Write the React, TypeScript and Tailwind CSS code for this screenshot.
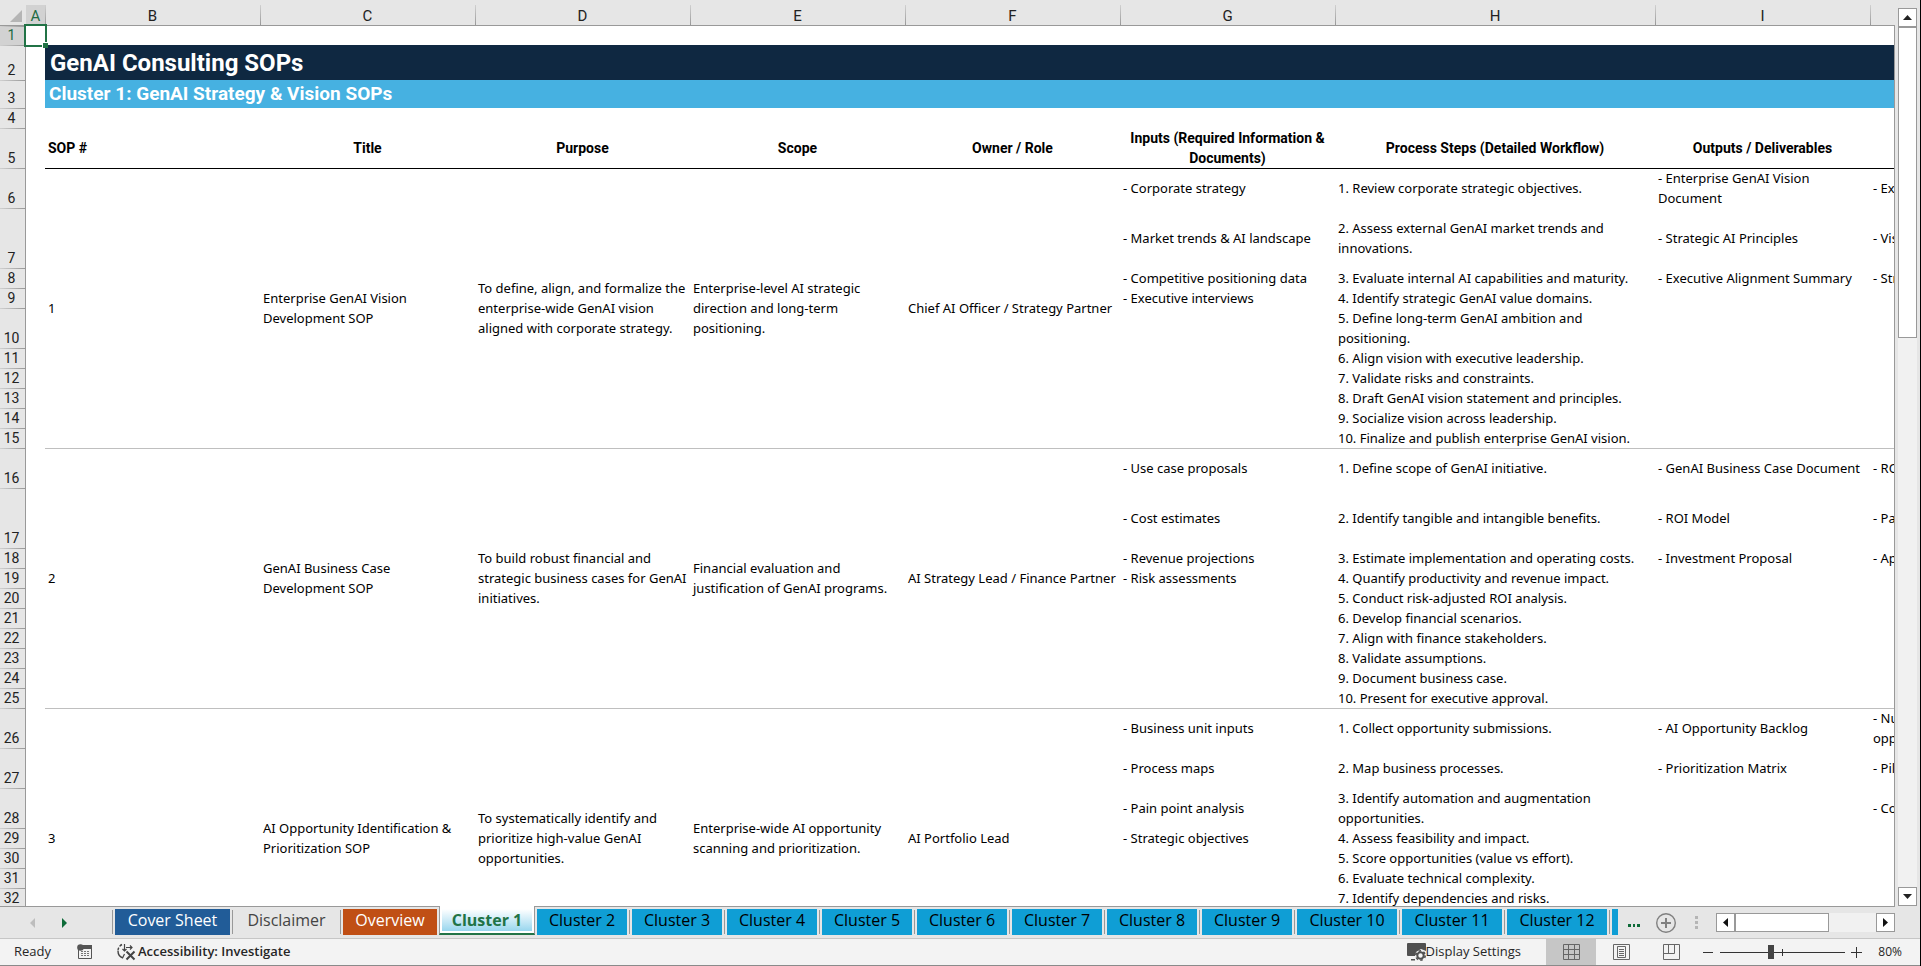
import { useState } from "react";

type Step = { h: string; input?: string; step?: string; output?: string; kpi?: string };
type Sop = { id: string; first: number; title: string; purpose: string; scope: string; owner: string; rows: Step[] };

const columns = ["B", "C", "D", "E", "F", "G", "H", "I"];

const sops: Sop[] = [
  {
    id: "1",
    first: 6,
    title: "Enterprise GenAI Vision\nDevelopment SOP",
    purpose: "To define, align, and formalize the\nenterprise-wide GenAI vision\naligned with corporate strategy.",
    scope: "Enterprise-level AI strategic\ndirection and long-term\npositioning.",
    owner: "Chief AI Officer / Strategy Partner",
    rows: [
      { h: "h-10", input: "- Corporate strategy", step: "1. Review corporate strategic objectives.", output: "- Enterprise GenAI Vision\nDocument", kpi: "- Ex" },
      { h: "h-15", input: "- Market trends & AI landscape", step: "2. Assess external GenAI market trends and\ninnovations.", output: "- Strategic AI Principles", kpi: "- Vis" },
      { h: "h-5", input: "- Competitive positioning data", step: "3. Evaluate internal AI capabilities and maturity.", output: "- Executive Alignment Summary", kpi: "- Str" },
      { h: "h-5", input: "- Executive interviews", step: "4. Identify strategic GenAI value domains." },
      { h: "h-10", step: "5. Define long-term GenAI ambition and\npositioning." },
      { h: "h-5", step: "6. Align vision with executive leadership." },
      { h: "h-5", step: "7. Validate risks and constraints." },
      { h: "h-5", step: "8. Draft GenAI vision statement and principles." },
      { h: "h-5", step: "9. Socialize vision across leadership." },
      { h: "h-5", step: "10. Finalize and publish enterprise GenAI vision." },
    ],
  },
  {
    id: "2",
    first: 16,
    title: "GenAI Business Case\nDevelopment SOP",
    purpose: "To build robust financial and\nstrategic business cases for GenAI\ninitiatives.",
    scope: "Financial evaluation and\njustification of GenAI programs.",
    owner: "AI Strategy Lead / Finance Partner",
    rows: [
      { h: "h-10", input: "- Use case proposals", step: "1. Define scope of GenAI initiative.", output: "- GenAI Business Case Document", kpi: "- RO" },
      { h: "h-15", input: "- Cost estimates", step: "2. Identify tangible and intangible benefits.", output: "- ROI Model", kpi: "- Pa" },
      { h: "h-5", input: "- Revenue projections", step: "3. Estimate implementation and operating costs.", output: "- Investment Proposal", kpi: "- Ap" },
      { h: "h-5", input: "- Risk assessments", step: "4. Quantify productivity and revenue impact." },
      { h: "h-5", step: "5. Conduct risk-adjusted ROI analysis." },
      { h: "h-5", step: "6. Develop financial scenarios." },
      { h: "h-5", step: "7. Align with finance stakeholders." },
      { h: "h-5", step: "8. Validate assumptions." },
      { h: "h-5", step: "9. Document business case." },
      { h: "h-5", step: "10. Present for executive approval." },
    ],
  },
  {
    id: "3",
    first: 26,
    title: "AI Opportunity Identification &\nPrioritization SOP",
    purpose: "To systematically identify and\nprioritize high-value GenAI\nopportunities.",
    scope: "Enterprise-wide AI opportunity\nscanning and prioritization.",
    owner: "AI Portfolio Lead",
    rows: [
      { h: "h-10", input: "- Business unit inputs", step: "1. Collect opportunity submissions.", output: "- AI Opportunity Backlog", kpi: "- Nu\nopp" },
      { h: "h-10", input: "- Process maps", step: "2. Map business processes.", output: "- Prioritization Matrix", kpi: "- Pil" },
      { h: "h-10", input: "- Pain point analysis", step: "3. Identify automation and augmentation\nopportunities.", kpi: "- Co" },
      { h: "h-5", input: "- Strategic objectives", step: "4. Assess feasibility and impact." },
      { h: "h-5", step: "5. Score opportunities (value vs effort)." },
      { h: "h-5", step: "6. Evaluate technical complexity." },
      { h: "h-5", step: "7. Identify dependencies and risks." },
      { h: "h-15" },
    ],
  },
];

const tabs = [
  { name: "Cover Sheet", look: "w-[115px] bg-[#215c98] text-white" },
  { name: "Disclaimer", look: "w-[103px] text-[#444444]" },
  { name: "Overview", look: "w-[94px] bg-[#c04f15] text-white" },
  { name: "Cluster 1", look: "w-[90px] bg-[#0f9ed5] text-black" },
  { name: "Cluster 2", look: "w-[90px] bg-[#0f9ed5] text-black" },
  { name: "Cluster 3", look: "w-[90px] bg-[#0f9ed5] text-black" },
  { name: "Cluster 4", look: "w-[90px] bg-[#0f9ed5] text-black" },
  { name: "Cluster 5", look: "w-[90px] bg-[#0f9ed5] text-black" },
  { name: "Cluster 6", look: "w-[90px] bg-[#0f9ed5] text-black" },
  { name: "Cluster 7", look: "w-[90px] bg-[#0f9ed5] text-black" },
  { name: "Cluster 8", look: "w-[90px] bg-[#0f9ed5] text-black" },
  { name: "Cluster 9", look: "w-[90px] bg-[#0f9ed5] text-black" },
  { name: "Cluster 10", look: "w-[100px] bg-[#0f9ed5] text-black" },
  { name: "Cluster 11", look: "w-[100px] bg-[#0f9ed5] text-black" },
  { name: "Cluster 12", look: "w-[100px] bg-[#0f9ed5] text-black" },
];

const cell = "p-0 pl-[3px] whitespace-pre text-left align-middle text-[13px] leading-5 font-['Noto_Sans',sans-serif]";
const edge = "border-r border-[#999999]";

function RowHead({ n, active = false }: { n?: number; active?: boolean }) {
  return (
    <th
      scope="row"
      className={
        "p-0 pr-[2px] border-r border-[#999999] align-bottom text-center font-normal bg-[linear-gradient(to_right,#d0d0d0,#999999)] bg-[length:100%_1px] bg-no-repeat " +
        (active ? "bg-[#d2d2d2] text-[#1e6b43]" : "bg-[#e6e6e6] text-[#222222]")
      }
    >
      {n}
    </th>
  );
}

function SopRows({ sop }: { sop: Sop }) {
  return (
    <>
      {sop.rows.map((row, i) => {
        const line = i > 0 ? "" : sop.first === 6 ? " shadow-[inset_0_1px_0_#000000]" : " shadow-[inset_0_1px_0_#bfbfbf]";
        return (
          <tr key={i} className={row.h}>
            <RowHead n={row.step ? sop.first + i : undefined} />
            <td className="p-0"></td>
            {i === 0 && (
              <>
                <td rowSpan={sop.rows.length} className={cell + line}>{sop.id}</td>
                <td rowSpan={sop.rows.length} className={cell + line}>{sop.title}</td>
                <td rowSpan={sop.rows.length} className={cell + line}>{sop.purpose}</td>
                <td rowSpan={sop.rows.length} className={cell + line}>{sop.scope}</td>
                <td rowSpan={sop.rows.length} className={cell + line}>{sop.owner}</td>
              </>
            )}
            <td className={cell + line}>{row.input}</td>
            <td className={cell + line}>{row.step}</td>
            <td className={cell + line}>{row.output}</td>
            <td className={cell + " overflow-hidden " + edge + line}>{row.kpi}</td>
          </tr>
        );
      })}
    </>
  );
}

function Sheet() {
  return (
    <main className="flex-1 min-w-0 overflow-hidden bg-white">
      <table className="w-full table-fixed border-separate border-spacing-0 text-[14px] leading-5 text-black">
        <colgroup>
          <col className="w-[26px]" />
          <col className="w-[19px]" />
          <col className="w-[215px]" />
          <col className="w-[215px]" />
          <col className="w-[215px]" />
          <col className="w-[215px]" />
          <col className="w-[215px]" />
          <col className="w-[215px]" />
          <col className="w-[320px]" />
          <col className="w-[215px]" />
          <col />
        </colgroup>
        <thead>
          <tr className="h-[26px] bg-[#e6e6e6] text-[15px] leading-[18px] text-[#222222]">
            <td className="p-0 border-b border-[#999999]">
              <button aria-label="Select all" className="block ml-[10px] mt-[6px]">
                <svg width="12" height="12" viewBox="0 0 12 12"><path d="M12 0V12H0Z" fill="#b5b5b5" /></svg>
              </button>
            </td>
            <th scope="col" className="p-0 pt-[7px] border-b border-[#999999] font-normal text-[#1e6b43] bg-[linear-gradient(#d2d2d2,#d2d2d2)] bg-[length:100%_20px] bg-bottom bg-no-repeat">A</th>
            {columns.map((c) => (
              <th key={c} scope="col" className="p-0 pt-[7px] border-b border-[#999999] font-normal bg-[linear-gradient(#d0d0d0,#999999)] bg-[length:1px_20px] bg-left-bottom bg-no-repeat">{c}</th>
            ))}
            <td className="p-0 border-b border-[#999999] bg-[linear-gradient(#d0d0d0,#999999)] bg-[length:1px_20px] bg-left-bottom bg-no-repeat"></td>
          </tr>
        </thead>
        <tbody>
          <tr className="h-[19px] leading-[19px]">
            <RowHead n={1} active />
            <td className="relative z-10 p-0">
              <span className="absolute -inset-[2px] border-2 border-[#217346]"></span>
              <span className="absolute -right-[3px] -bottom-[3px] size-[6px] border-t border-l border-white bg-[#217346]"></span>
            </td>
            <td colSpan={9} className={"p-0 " + edge}></td>
          </tr>
          <tr className="h-[35px]">
            <RowHead n={2} />
            <td className="p-0"></td>
            <td colSpan={9} className={"p-0 pl-[5px] bg-[#0f2841] text-white text-2xl leading-[34px] font-bold align-middle " + edge}>GenAI Consulting SOPs</td>
          </tr>
          <tr className="h-[28px]">
            <RowHead n={3} />
            <td className="p-0"></td>
            <td colSpan={9} className={"p-0 pl-1 bg-[#46b1e1] text-white text-[19px] leading-7 font-bold align-middle " + edge}>Cluster 1: GenAI Strategy &amp; Vision SOPs</td>
          </tr>
          <tr className="h-5">
            <RowHead n={4} />
            <td colSpan={10} className={"p-0 " + edge}></td>
          </tr>
          <tr className="h-10">
            <RowHead n={5} />
            <td className="p-0"></td>
            <th scope="col" className="p-0 pl-[3px] text-left font-bold">SOP #</th>
            <th scope="col" className="p-0 font-bold">Title</th>
            <th scope="col" className="p-0 font-bold">Purpose</th>
            <th scope="col" className="p-0 font-bold">Scope</th>
            <th scope="col" className="p-0 font-bold">Owner / Role</th>
            <th scope="col" className="p-0 font-bold whitespace-pre">{"Inputs (Required Information &\nDocuments)"}</th>
            <th scope="col" className="p-0 font-bold">Process Steps (Detailed Workflow)</th>
            <th scope="col" className="p-0 font-bold">Outputs / Deliverables</th>
            <td className={"p-0 " + edge}></td>
          </tr>
          {sops.map((s) => (
            <SopRows key={s.id} sop={s} />
          ))}
        </tbody>
      </table>
    </main>
  );
}

const scrollButton = "flex items-center justify-center shrink-0 size-[19px] bg-white border border-[#999999]";

function VerticalScroll() {
  return (
    <div className="flex flex-col w-[19px] shrink-0 mx-[3px] pt-2 bg-[#e6e6e6]">
      <button aria-label="Scroll up" className={scrollButton}>
        <svg width="9" height="5" viewBox="0 0 9 5"><path d="M4.5 0L9 5H0Z" fill="#222222" /></svg>
      </button>
      <div className="flex-1 bg-[#f1f1f1]">
        <div className="h-[311px] bg-white border border-[#999999]"></div>
      </div>
      <button aria-label="Scroll down" className={scrollButton}>
        <svg width="9" height="5" viewBox="0 0 9 5"><path d="M0 0H9L4.5 5Z" fill="#222222" /></svg>
      </button>
    </div>
  );
}

function TabBar() {
  const [active, setActive] = useState("Cluster 1");

  return (
    <nav className="flex h-8 shrink-0 mr-[25px] border-t border-[#999999] font-['Open_Sans',sans-serif]">
      <div className="flex items-center w-[112px] shrink-0 pl-[30px] gap-[27px]">
        <button aria-label="Previous sheets">
          <svg width="5" height="10" viewBox="0 0 5 10"><path d="M5 0V10L0 5Z" fill="#bdbdbd" /></svg>
        </button>
        <button aria-label="Next sheets">
          <svg width="5" height="10" viewBox="0 0 5 10"><path d="M0 0V10L5 5Z" fill="#0e6b39" /></svg>
        </button>
      </div>

      <span className="w-px h-6 mt-[3px] bg-[#999999]"></span>
      {tabs.map((tab, i) => {
        const isActive = tab.name === active;
        const beforeActive = tabs[i + 1]?.name === active;
        if (isActive) {
          return (
            <button
              key={tab.name}
              onClick={() => setActive(tab.name)}
              className="flex flex-col w-24 h-[29px] -mt-px shrink-0 bg-white border-x border-x-[#999999] border-b-2 border-b-[#217346] p-[2px] pt-[3px]"
            >
              <span className="w-full h-[23px] bg-linear-to-b from-white to-[#97d6ee] text-base leading-[22px] font-bold text-[#217346]">{tab.name}</span>
            </button>
          );
        }
        return (
          <div key={tab.name} className="flex shrink-0">
            <button onClick={() => setActive(tab.name)} className={"h-[26px] mt-[2px] mx-[2px] pb-1 text-base leading-[22px] " + tab.look}>
              {tab.name}
            </button>
            {!beforeActive && <span className="w-px h-6 mt-[3px] bg-[#999999]"></span>}
          </div>
        );
      })}
      <span className="w-[6px] h-[26px] mt-[2px] ml-[2px] bg-[#0f9ed5]"></span>

      <button aria-label="More sheets" className="ml-[10px] w-3 flex items-center gap-[2px] pt-[5px]">
        <span className="size-[3px] bg-[#0e6b39]"></span>
        <span className="size-[3px] bg-[#0e6b39]"></span>
        <span className="size-[3px] bg-[#0e6b39]"></span>
      </button>
      <button aria-label="New sheet" className="ml-4 flex items-center">
        <svg width="20" height="20" viewBox="0 0 20 20" fill="none" stroke="#808080">
          <circle cx="10" cy="10" r="9.3" strokeWidth="1.4" />
          <path d="M10 5V15M5 10H15" strokeWidth="2" />
        </svg>
      </button>

      <div className="ml-auto flex items-center">
        <div className="flex flex-col gap-[2px] mr-[18px]">
          <span className="size-[3px] bg-[#b5b5b5]"></span>
          <span className="size-[3px] bg-[#b5b5b5]"></span>
          <span className="size-[3px] bg-[#b5b5b5]"></span>
        </div>
        <button aria-label="Scroll left" className={scrollButton}>
          <svg width="5" height="9" viewBox="0 0 5 9"><path d="M5 0V9L0 4.5Z" fill="#111111" /></svg>
        </button>
        <div className="w-[141px] h-[19px] bg-[#f1f1f1]">
          <div className="w-[94px] h-[19px] bg-white border border-[#999999]"></div>
        </div>
        <button aria-label="Scroll right" className={scrollButton}>
          <svg width="5" height="9" viewBox="0 0 5 9"><path d="M0 0V9L5 4.5Z" fill="#111111" /></svg>
        </button>
      </div>
    </nav>
  );
}

function StatusBar() {
  const [zoom, setZoom] = useState(80);

  return (
    <footer className="flex items-center h-7 shrink-0 bg-[#f3f3f3] border-t border-t-[#c6c6c6] border-b border-b-[#8a8a8a] text-[13px] text-[#262626] font-['Open_Sans',sans-serif]">
      <span className="ml-[14px] w-[63px]">Ready</span>
      <button aria-label="Record macro" className="mr-6">
        <svg width="16" height="16" viewBox="0 0 16 16" fill="none">
          <path d="M1.5 5.5V14.5H14.5V2" stroke="#555555" />
          <path d="M6 1H15V5H6Z" fill="#555555" />
          <circle cx="3.5" cy="3.5" r="3.3" fill="#555555" />
          <path d="M4 7.5H6M7 7.5H9M10 7.5H12M4 9.5H6M7 9.5H9M10 9.5H12M4 11.5H6M7 11.5H9M10 11.5H12" stroke="#777777" />
        </svg>
      </button>
      <button className="flex items-center gap-[2px] font-semibold">
        <svg width="19" height="18" viewBox="0 0 19 18" fill="none" stroke="#444444">
          <path d="M5 1.5A7 7 0 0 0 1 8" strokeWidth="1.4" strokeDasharray="3 1.5" />
          <path d="M1 8C1 11.5 3 14 6 15" strokeWidth="1.4" />
          <path d="M7.5 1V8M5.5 6L7.5 8L9.5 6M9 4.5H15M13 2.5L15 4.5L13 6.5M7.5 11L5.5 15" strokeWidth="1.2" />
          <path d="M9.5 8.5L17.5 16.5M17.5 8.5L9.5 16.5" strokeWidth="2" />
        </svg>
        Accessibility: Investigate
      </button>

      <button className="ml-auto flex items-center">
        <svg width="19" height="18" viewBox="0 0 19 18">
          <path d="M1 0H18Q19 0 19 1V8L14 6L9 9L8 13H1Q0 13 0 12V1Q0 0 1 0Z" fill="#505050" />
          <path d="M4 16H8V17.5H4Z" fill="#505050" />
          <circle cx="13.5" cy="12.5" r="3.2" fill="none" stroke="#505050" strokeWidth="2" />
          <circle cx="13.5" cy="12.5" r="4.7" fill="none" stroke="#505050" strokeWidth="1.6" strokeDasharray="2.46 2.46" />
        </svg>
        Display Settings
      </button>
      <button aria-label="Normal view" className="ml-[25px] w-[50px] h-[26px] flex items-center justify-center bg-[#c6c6c6]">
        <svg width="17" height="16" viewBox="0 0 17 16" fill="none" stroke="#666666">
          <path d="M.5 .5H16.5V15.5H.5ZM.5 5.5H16.5M.5 10.5H16.5M5.5 .5V15.5M11.5 .5V15.5" />
        </svg>
      </button>
      <button aria-label="Page layout" className="w-[50px] h-[26px] flex items-center justify-center">
        <svg width="17" height="16" viewBox="0 0 17 16" fill="none" stroke="#666666">
          <path d="M.5 .5H16.5V15.5H.5ZM4.5 2.5H12.5V13.5H4.5ZM6 5.5H11M6 7.5H11M6 9.5H11M6 11.5H11" />
        </svg>
      </button>
      <button aria-label="Page break preview" className="w-[50px] h-[26px] flex items-center justify-center">
        <svg width="17" height="16" viewBox="0 0 17 16" fill="none" stroke="#666666">
          <path d="M.5 .5H16.5V15.5H.5ZM5.5 .5V9.5M11.5 .5V9.5M.5 9.5H11.5" />
        </svg>
      </button>
      <button aria-label="Zoom out" onClick={() => setZoom(zoom - 10)} className="ml-[7px]">
        <svg width="10" height="11" viewBox="0 0 10 11"><path d="M0 5.5H10" stroke="#333333" /></svg>
      </button>
      <div className="relative w-[125px] h-[15px] ml-[7px]">
        <span className="absolute left-[62px] top-[4px] w-px h-[7px] bg-[#333333]"></span>
        <input
          type="range"
          aria-label="Zoom"
          min={0}
          max={200}
          value={zoom}
          onChange={(e) => setZoom(Number(e.target.value))}
          className="absolute inset-0 w-full h-[15px] appearance-none bg-[linear-gradient(#333333,#333333)] bg-[length:100%_1px] bg-center bg-no-repeat [&::-webkit-slider-thumb]:appearance-none [&::-webkit-slider-thumb]:w-[6px] [&::-webkit-slider-thumb]:h-[14px] [&::-webkit-slider-thumb]:bg-[#444444]"
        />
      </div>
      <button aria-label="Zoom in" onClick={() => setZoom(zoom + 10)} className="ml-[6px]">
        <svg width="11" height="11" viewBox="0 0 11 11"><path d="M0 5.5H11M5.5 0V11" stroke="#333333" /></svg>
      </button>
      <span className="w-10 mr-[18px] text-right text-xs">{zoom}%</span>
    </footer>
  );
}

export default function App() {
  return (
    <div className="flex flex-col h-screen overflow-hidden bg-[#e6e6e6] border-r border-black font-['Roboto',sans-serif]">
      <div className="flex flex-1 min-h-0">
        <Sheet />
        <VerticalScroll />
      </div>
      <TabBar />
      <StatusBar />
    </div>
  );
}
